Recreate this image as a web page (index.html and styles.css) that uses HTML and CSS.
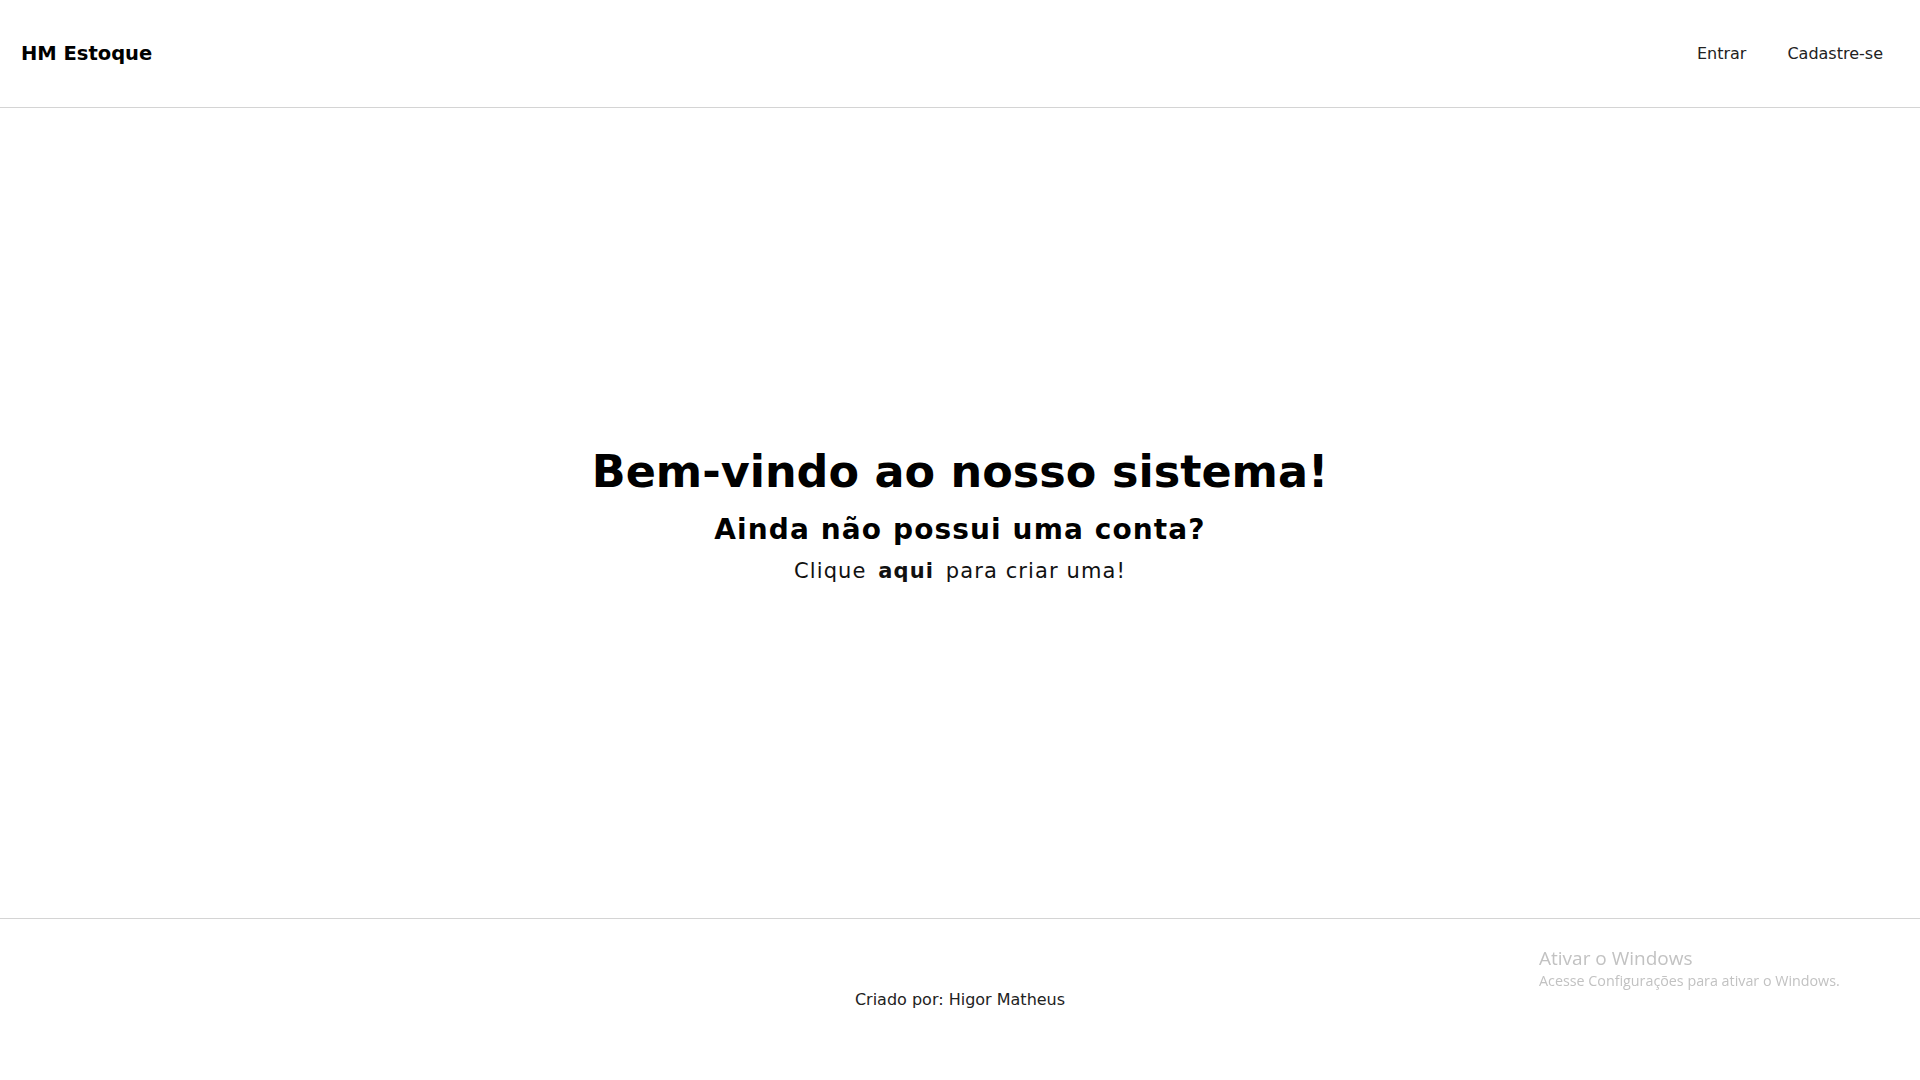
FILE: index.html
```html
<!DOCTYPE html>
<html lang="pt-BR">
<head>
<meta charset="utf-8">
<title>HM Estoque</title>
<link rel="stylesheet" href="styles.css">
</head>
<body>
<div class="page">
  <header class="topbar">
    <a class="brand" href="#">HM Estoque</a>
    <nav class="nav">
      <a href="#">Entrar</a>
      <a href="#">Cadastre-se</a>
    </nav>
  </header>
  <main class="hero">
    <h1 class="title">Bem-vindo ao nosso sistema!</h1>
    <h2 class="subtitle">Ainda não possui uma conta?</h2>
    <p class="cta">Clique <a href="#">aqui</a> para criar uma!</p>
  </main>
  <footer class="footer">
    <p>Criado por: Higor Matheus</p>
  </footer>
</div>
<div class="watermark">
  <div class="wm-title">Ativar o Windows</div>
  <div class="wm-sub">Acesse Configurações para ativar o Windows.</div>
</div>
</body>
</html>
```
FILE: styles.css
```css
* { box-sizing: border-box; }
html, body { margin: 0; padding: 0; background: #fff; }
body {
  font-family: "DejaVu Sans", "Inter", sans-serif;
  color: #000;
}
a { color: inherit; text-decoration: none; }
.page {
  display: flex;
  flex-direction: column;
  height: 1080px;
}
.topbar {
  height: 108px;
  flex: none;
  display: flex;
  align-items: center;
  justify-content: space-between;
  padding: 0 37px 0 21px;
  border-bottom: 1px solid #d4d4d4;
}
.brand {
  font-size: 19.5px;
  font-weight: 700;
  color: #000;
}
.nav {
  display: flex;
  gap: 41px;
}
.nav a {
  font-size: 16px;
  color: #222;
}
.hero {
  flex: 1;
  display: flex;
  flex-direction: column;
  align-items: center;
  justify-content: center;
  text-align: center;
  padding-top: 3px;
}
.title {
  margin: 0;
  font-size: 44.5px;
  font-weight: 700;
  line-height: 54px;
}
.subtitle {
  margin: 13px 0 0;
  font-size: 28px;
  font-weight: 700;
  line-height: 36px;
  letter-spacing: 1.1px;
}
.cta {
  margin: 9px 0 0;
  font-size: 21px;
  font-weight: 400;
  line-height: 28px;
  letter-spacing: 1.1px;
  color: #111;
}
.cta a {
  font-weight: 700;
  margin: 0 4px;
}
.footer {
  height: 162px;
  flex: none;
  display: flex;
  align-items: center;
  justify-content: center;
  border-top: 1px solid #d4d4d4;
}
.footer p {
  margin: 0;
  font-size: 16px;
  color: #222;
}
.watermark {
  position: fixed;
  left: 1539px;
  top: 946px;
  font-family: "Open Sans", "Noto Sans", sans-serif;
  color: #c2c2c2;
}
.wm-title { font-size: 19px; line-height: 24px; }
.wm-sub { font-size: 14.3px; line-height: 21px; }
```
